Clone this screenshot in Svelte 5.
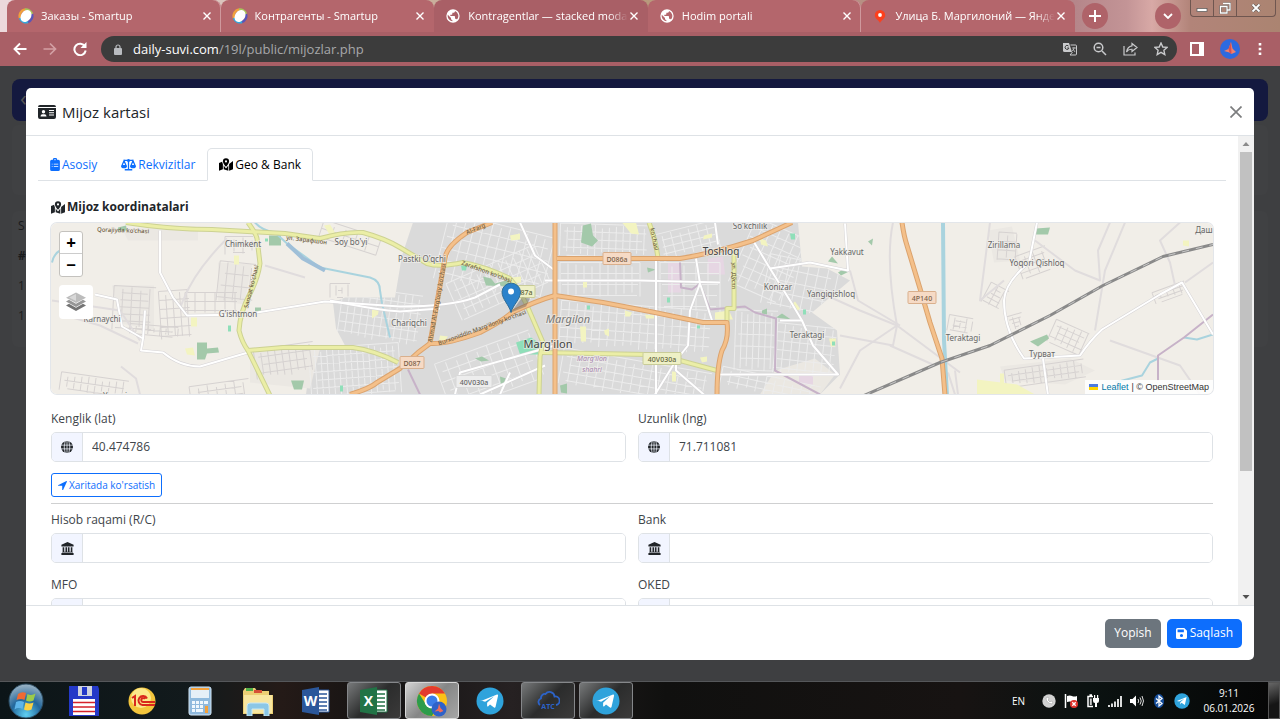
<script lang="ts">
    const browserTabs = [
        { title: 'Заказы - Smartup', icon: 'smartup', shade: 'light' },
        { title: 'Контрагенты - Smartup', icon: 'smartup', shade: 'light' },
        { title: 'Kontragentlar — stacked moda', icon: 'globe', shade: 'current' },
        { title: 'Hodim portali', icon: 'globe', shade: 'light' },
        { title: 'Улица Б. Маргилоний — Янде', icon: 'pin', shade: 'light' },
    ];

    let tab = $state('geo');
    let lat = $state('40.474786');
    let lng = $state('71.711081');

    const tabs = [
        ['main', 'Asosiy', 'clipboard'],
        ['req', 'Rekvizitlar', 'scale'],
        ['geo', 'Geo & Bank', 'map'],
    ];

    const bankFields = [
        ['account', 'Hisob raqami (R/C)'],
        ['bank', 'Bank'],
        ['mfo', 'MFO'],
        ['oked', 'OKED'],
    ];

    const taskItems = [
        ['Total Commander', 'floppy', ''],
        ['1C', 'onec', ''],
        ['Calculator', 'calc', ''],
        ['Explorer', 'folder', ''],
        ['Word', 'word', ''],
        ['Excel', 'excel', 'open'],
        ['Chrome', 'chrome', 'focused'],
        ['Telegram', 'telegram', ''],
        ['ATC', 'atc', 'open'],
        ['Telegram', 'telegram', 'open'],
    ];

    // x, y, width, height, rotation, column step, row step
    type Block = [number, number, number, number, number, number, number];

    const cityBlocks: Block[] = [
        [440, 224, 110, 68, 14, 9, 12],
        [450, 262, 96, 40, -24, 8, 10],
        [340, 290, 80, 50, 8, 7, 9],
        [310, 345, 90, 50, -4, 6, 8],
        [440, 345, 100, 50, -20, 11, 10],
        [560, 224, 90, 32, 2, 7, 8],
        [560, 262, 80, 34, 0, 8, 11],
        [560, 305, 150, 44, 4, 8, 9],
        [560, 360, 150, 36, 10, 9, 8],
        [655, 226, 70, 28, -14, 9, 7],
        [740, 226, 60, 70, 24, 9, 10],
        [660, 262, 60, 50, 0, 12, 11],
        [735, 310, 42, 60, 2, 6, 12],
        [775, 325, 60, 50, 6, 8, 9],
        [720, 376, 100, 20, 12, 9, 7],
        [765, 260, 70, 50, 12, 10, 12],
    ];

    const villageBlocks: Block[] = [
        [113, 286, 42, 44, 3, 9, 7],
        [160, 290, 30, 48, -4, 7, 9],
        [185, 292, 52, 20, 0, 10, 9],
        [218, 262, 36, 40, 6, 8, 12],
        [225, 236, 28, 18, 0, 9, 8],
        [60, 376, 68, 18, 8, 7, 8],
        [130, 325, 48, 10, 5, 6, 5],
        [190, 382, 60, 18, -8, 9, 7],
        [255, 345, 60, 30, -8, 7, 8],
        [330, 283, 20, 14, 0, 6, 7],
        [998, 232, 18, 28, 4, 9, 9],
        [1018, 250, 32, 24, -20, 9, 6],
        [985, 285, 20, 22, 28, 8, 5],
        [1008, 314, 16, 16, -16, 6, 4],
        [948, 316, 24, 16, 10, 6, 5],
        [1005, 364, 80, 18, -8, 7, 6],
        [1050, 325, 36, 24, 24, 7, 6],
        [1153, 286, 34, 12, -20, 7, 4],
        [320, 228, 60, 18, 18, 12, 9],
    ];

    function grid([x, y, w, h, , dx, dy]: Block): string {
        let d = '';
        for (let i = 0; i <= w; i += dx) {
            const cut = (i * 7) % 5;
            d += `M${x + i} ${y + cut}V${y + h - cut}`;
        }
        for (let j = 0; j <= h; j += dy) {
            const cut = (j * 5) % 9;
            d += `M${x + cut} ${y + j}H${x + w - cut}`;
        }
        return d;
    }

    function turn([x, y, w, h, a]: Block): string {
        return `rotate(${a} ${x + w / 2} ${y + h / 2})`;
    }

    const yellowRoads = [
        'M126 222Q170 229 212 229L285 233L320 238Q345 231 363 232Q385 238 400 247L427 263Q440 267 463 262Q485 266 510 278Q520 290 527 305L543 342L540 356L539 395',
        'M248 222Q256 233 257 238L260 263Q258 278 250 293Q240 312 239 330Q242 342 248 350L270 395',
        'M248 350L283 347H353Q375 350 398 362',
        'M542 352L647 354L680 360L717 370',
        'M649 222Q656 240 658 258',
        'M734 250V308H727V322',
    ];

    const orangeRoads = [
        'M350 394Q370 388 377 382L400 368L418 352L430 343Q447 344 480 332Q500 322 512 312Q537 300 555 295L603 302L650 311L703 322H727Q729 338 722 350Q717 365 717 395',
        'M555 222V395',
        'M430 343L437 302L445 258Q446 246 467 232L492 222',
        'M557 258H680Q713 253 753 240L792 222',
        'M902 222Q904 236 907 245L920 288L930 322L942 358L945 395',
    ];

    const whiteRoads = [
        'M160 230V272L173 297L187 315L245 314L325 301L400 306Q450 306 475 297L500 284',
        'M95 294L117 299L122 326L143 338L141 350L163 352Q180 366 200 366L248 352',
        'M143 338L145 310',
        'M753 240L770 268L790 300L802 320L813 345L838 374H717',
        'M770 268L810 262L848 270L845 223',
        'M656 258V394M696 258L700 283L712 320M700 283L690 310L688 345L676 360L655 394',
        'M715 222L718 244M676 360V370L705 395',
        'M520 222L535 255L555 270M510 372L500 394',
        'M545 280H640L720 282M330 300Q380 310 400 311L440 308',
        'M455 394L460 372L555 345M480 394L545 365',
        'M1037 222L1029 262Q1005 282 1004 300Q1004 330 1024 358L1080 355Q1090 340 1102 329L1160 294L1182 282L1213 334',
        'M1043 358L1048 395',
        'M780 320H802',
    ];

    const tracks = [
        'M227 238Q195 270 183 300L180 308M265 265L305 277',
        'M121 366L136 378L140 394',
        'M893 222Q885 260 897 325L860 310L820 292M897 325L860 350L840 388M840 335L893 345L897 325L960 372',
        'M850 270L858 300L900 325M890 345L935 365',
        'M1110 222L1098 250L1100 280L1075 270L1035 240M1125 222L1105 270L1095 330',
        'M1180 222L1160 240L1170 262L1175 285M990 222L980 300L1004 280M1213 262L1185 282',
        'M955 370L958 394M948 372L955 394M1110 340L1180 365L1200 394',
        'M52 300L120 310L140 340M62 314L100 325L138 343',
    ];

    const boundaries = [
        'M680 262L681 287L692 289L700 283L710 309L745 306L755 312L776 318L775 370L820 394',
        'M408 369L420 394',
        'M1158 380V355L1184 337L1213 314',
    ];

    const greens = [
        'M269 235h12v10h-12z', 'M197 342h10v6l11 -1l1 5l-12 1l-2 6h-8z', 'M291 380l13 0l-2 9h-8z',
        'M118 227l8 -2l1 5h-9z', 'M255 307h6v5h-6z', 'M483 276l8 2l4 5l15 -4l-2 7l-22 -1z',
        'M583 225l8 -2l2 12l5 5l-6 6l-11 -4z', 'M475 358l7 -2l7 4l-8 1z', 'M500 376l6 2l-2 8h-3z',
        'M560 385l7 -2v10l-6 -1z', 'M828 261l4 -5l6 7z', 'M838 272l5 -3l6 2l-8 4z',
        'M776 317l6 -4l9 6z', 'M762 310l5 -2v6l-5 -1z', 'M1036 228l14 -1l-2 7h-12z', 'M1030 341l17 -7l2 4l-11 8z',
        'M647 267l9 2l-8 3z', 'M868 241l5 -3l-1 7z',
    ];

    const yellows = [
        'M234 255h5v9h-5z', 'M191 317h6v9h-6z', 'M185 348l8 -1l2 8l-8 -1z', 'M324 225l6 -1l5 8l-5 3z',
        'M372 309l7 -1l-1 6l-6 4z', 'M510 235l10 -2v6l-9 1z', 'M512 277l9 -1v6l-8 1z', 'M580 326l6 0v15h-5z',
        'M622 222l14 0l3 12l-8 -1z', 'M583 279h4v8h-4z', 'M604 330l5 -2v8l-4 -2z', 'M440 335l8 1l-3 4h-6z',
        'M700 357l7 -1v5l-5 1z', 'M672 371h4v10h-4z', 'M715 312l14 -2l4 9h-18z', 'M795 301l5 7l-3 3l-4 -8z',
        'M829 338l7 0l-1 8h-4z', 'M704 235l8 -2v4l-9 2z', 'M760 238l6 2l2 6l-7 -2z', 'M625 310l7 2l-2 4h-5z',
        'M1183 240l6 0v6l-6 -1z', 'M977 379l40 5l18 10h-58z', 'M1000 373h4v12h-4z', 'M645 314l9 1v3h-8z',
    ];

    const mints = [
        'M265 238h3v3h-3z', 'M228 325h3v6h-3z', 'M340 385h3v6h-3z', 'M461 265h6l-1 5h-4z', 'M516 342l15 -5l9 6l-2 11l-18 0z',
        'M790 233h5v6h-4z', 'M803 309h3v5h-3z', 'M667 297h3v5h-3z', 'M832 341h3v4h-3z', 'M697 325h3v3h-3z', 'M587 305h3v4h-3z',
    ];

    // text, x, y, size, class
    const places: [string, number, number, number, string][] = [
        ['Chimkent', 243, 246, 8, ''], ["Soy bo'yi", 351, 244, 8, ''], ["Pastki O'qchi", 422, 261, 8, ''],
        ["G'ishtmon", 238, 316, 8, ''], ['Karnaychi', 102, 321, 8, ''], ['Chariqchi', 409, 325, 8, ''],
        ['Toshloq', 721, 254, 10, 'town'], ["So'kchilik", 750, 228, 8, ''], ['Yakkavut', 847, 254, 8, ''],
        ['Konizar', 778, 289, 8, ''], ['Yangiqishloq', 831, 296, 8, ''], ['Teraktagi', 807, 337, 8, ''],
        ['Margilon', 568, 322, 11, 'district'], ["Marg'ilon", 548, 347, 11, 'town'],
        ["Marg'ilon", 592, 360, 7, 'admin'], ['shahri', 592, 371, 7, 'admin'],
        ['Zirillama', 1004, 247, 8, ''], ['Yoqori Qishloq', 1037, 265, 8, ''], ['Teraktagi', 963, 340, 8, ''],
        ['Турват', 1042, 356, 8, ''], ['Даш', 1204, 232, 8, ''], ['Yoqori', 115, 398, 8, ''],
    ];

    // text, x, y, width, kind
    const shields: [string, number, number, number, string][] = [
        ['D086a', 617, 258, 28, 'orange'], ['D087', 412, 362, 24, 'orange'], ['4P140', 922, 297, 28, 'orange'],
        ['D087a', 522, 291, 26, 'yellow'], ['40V030a', 662, 358, 38, 'yellow'], ['40V030a', 474, 381, 36, 'grey'],
    ];
</script>

{#snippet icon(name)}
    {#if name === 'clipboard'}
        <svg class="ico" width="10" height="13" viewBox="0 0 12 16"><path fill="currentColor" fill-rule="evenodd" d="M2 2h1.500a2.500 2.500 0 0 1 5 0H10a2 2 0 0 1 2 2v10a2 2 0 0 1-2 2H2a2 2 0 0 1-2-2V4a2 2 0 0 1 2-2zm4-.7a.8.8 0 1 0 0 1.600.8.8 0 0 0 0-1.600zM2 7v1h1V7zm2.500 0v1H10V7zM2 10v1h1v-1zm2.500 0v1H10v-1z" /></svg>
    {:else if name === 'scale'}
        <svg class="ico" width="15" height="13" viewBox="0 0 20 16"><g fill="none" stroke="currentColor" stroke-width="1.700"><path d="M4 2.500h12M10 2v12.500M5 15h10M4 3L1.300 9.500h5.400zM16 3l-2.700 6.500h5.400z" /></g><circle cx="10" cy="2.500" r="2" fill="currentColor" /><path fill="currentColor" d="M0 9.500h8a4 3.500 0 0 1-8 0zM12 9.500h8a4 3.500 0 0 1-8 0z" /></svg>
    {:else if name === 'map'}
        <svg class="ico" width="14" height="13" viewBox="0 0 18 16"><path fill="currentColor" fill-rule="evenodd" d="M9 0a4 4 0 0 1 4 4c0 2-2.500 5-4 7-1.500-2-4-5-4-7a4 4 0 0 1 4-4zm0 2.600a1.400 1.400 0 1 0 0 2.800 1.400 1.400 0 0 0 0-2.800zM0 6l4-1.500c.2 1 .6 2 1 2.800V14l-5 2zM6 9.300l3 3.700 3-3.700V16l-6-2zM13 7.300L18 3.500V14l-5 2z" /></svg>
    {:else if name === 'globe'}
        <svg class="ico" width="12" height="12" viewBox="0 0 16 16"><circle cx="8" cy="8" r="8" fill="currentColor" /><path d="M0 5.500h16M0 10.500h16M8 0v16M5.500 0Q3 8 5.500 16M10.500 0Q13 8 10.500 16" fill="none" stroke="#f2f5ff" /></svg>
    {:else if name === 'bank'}
        <svg class="ico" width="13" height="13" viewBox="0 0 16 16"><path fill="currentColor" d="M8 0l7.500 3.500V5.500H.5v-2zM2 6.500h2V12h1.500V6.500h2V12h1V6.500h2V12H12V6.500h2V12l1 1H1l1-1zM.5 13.500h15V16H.5z" /></svg>
    {:else if name === 'arrow'}
        <svg class="ico" width="9" height="9" viewBox="0 0 16 16"><path fill="currentColor" d="M0 7.500L15 0Q16 0 16 1L9 16H7.500V8.500H0z" /></svg>
    {:else if name === 'save'}
        <svg class="ico" width="11" height="11" viewBox="0 0 14 14"><path fill="currentColor" fill-rule="evenodd" d="M2 0h8.500L14 3.500V12a2 2 0 0 1-2 2H2a2 2 0 0 1-2-2V2a2 2 0 0 1 2-2zm0 2v3.500h8V2zm5 5.500a2 2 0 1 0 0 4 2 2 0 0 0 0-4z" /></svg>
    {/if}
{/snippet}

{#snippet taskIcon(name)}
    {#if name === 'floppy'}
        <svg width="32" height="32" viewBox="0 0 32 32"><path d="M1 1h29l1 3v27H1z" fill="#2439c8" /><path d="M10 1h14v10H10z" fill="#cfd3de" /><path d="M14 2h5v8h-5z" fill="#2439c8" /><path d="M5 14h22v16H5z" fill="#fff" /><path d="M5 17.500h22M5 22h22M5 26.500h22" stroke="#d5222a" stroke-width="1.300" /></svg>
    {:else if name === 'onec'}
        <svg width="28" height="28" viewBox="0 0 28 28"><circle cx="14" cy="14" r="13.500" fill="#f3c53c" /><circle cx="13" cy="11" r="10" fill="#fce98a" /><g fill="none" stroke="#d9281d" stroke-width="2"><path d="M4 11l3-2v10M19 11.500a4.500 4.500 0 1 0-4.500 6.500H27M17 12a2 2 0 1 0-2 3h12" /></g></svg>
    {:else if name === 'calc'}
        <svg width="24" height="30" viewBox="0 0 24 30"><rect x="1" y="1" width="22" height="28" rx="2" fill="#8fb9dd" stroke="#d7e9f7" /><path d="M3 3h18v9H3z" fill="#e6eff7" /><path d="M3 3h18" stroke="#f3a13b" stroke-width="2" /><path d="M4 15h3v3H4zM8 15h3v3H8zM12 15h3v3h-3zM16 15h4v3h-4zM4 19h3v3H4zM8 19h3v3H8zM12 19h3v3h-3zM4 23h3v3H4zM8 23h7v3H8z" fill="#eff7fd" /><path d="M17 20h3v7h-3z" fill="#f3a13b" /></svg>
    {:else if name === 'folder'}
        <svg width="32" height="30" viewBox="0 0 32 30"><path d="M1 5l2-3h10l2 3h12v4h4v19H1z" fill="#eccf74" /><path d="M4 2h7v3H4z" fill="#4fae49" /><path d="M12 4h8v3h-8z" fill="#d65038" /><path d="M2 9h28v18H2z" fill="#f8e6a0" /><path d="M5 30V20q0-3 3-3h16q3 0 3 3v10h-5v-7H10v7z" fill="#8cc7e6" stroke="#c9e8f5" /></svg>
    {:else if name === 'word' || name === 'excel'}
        <svg class={name} width="30" height="30" viewBox="0 0 30 30"><path d="M15 4h13v22H15z" fill="#fff" stroke="currentColor" /><path d="M18 8h8M18 12h8M18 16h8M18 20h8M18 24h8" stroke="currentColor" stroke-width="1.500" /><path d="M1 4l17-3v28L1 26z" fill="currentColor" /><text x="9.500" y="20" text-anchor="middle" font-size="14" font-weight="700" fill="#fff">{name === 'word' ? 'W' : 'X'}</text></svg>
    {:else if name === 'chrome'}
        <svg width="32" height="32" viewBox="0 0 32 32"><circle cx="16" cy="16" r="15" fill="#fbc116" /><path d="M16 16L3 8.500A15 15 0 0 1 29 8.500H16z" fill="#e33b2e" /><path d="M3 8.500A15 15 0 0 0 16 31l6.500-11.500L10 19.500z" fill="#2d9c4b" /><circle cx="16" cy="16" r="7.500" fill="#fff" /><circle cx="16" cy="16" r="5.500" fill="#3b7de8" /><circle cx="23" cy="24" r="7.500" fill="#2f62c9" /><path d="M23 18.500l1.500 4.500 3 3-3.500 1.500-1.500-1.500-4 .5 3.500-3z" fill="#ee6c5b" /></svg>
    {:else if name === 'telegram'}
        <svg width="28" height="28" viewBox="0 0 28 28"><circle cx="14" cy="14" r="13.500" fill="#2fa3dc" /><path d="M5 14L21 7.500q1.500-.4 1 1.500l-2.500 11q-.5 1-1.500.4l-4-3-2 2q-.8.500-.9-.6v-3l7-6.500-9 5.500-4-1.200q-.8-.4-.1-.6z" fill="#fff" /></svg>
    {:else}
        <svg width="24" height="20" viewBox="0 0 24 20"><path d="M4 14a3.700 3.700 0 0 1 1-6.500 4 4 0 0 1 4.500-4.500 5 5 0 0 1 9 2.500 4.300 4.300 0 0 1 1.500 8.500" fill="none" stroke="#2c63c8" stroke-width="1.800" /><text x="12" y="18" text-anchor="middle" font-size="7" font-weight="700" fill="#2c63c8">ATC</text></svg>
    {/if}
{/snippet}

<div class="screen">
    <header class="browser">
        <div class="strip">
            <div class="browser-tabs">
                {#each browserTabs as t}
                    <div class="browser-tab {t.shade}">
                        {#if t.icon === 'smartup'}
                            <svg width="16" height="16" viewBox="0 0 16 16"><path d="M2 10A6.500 6.500 0 0 1 7 1.500" fill="none" stroke="#f0a03c" stroke-width="2.500" /><path d="M7 1.500A6.500 6.500 0 0 1 14 6" fill="none" stroke="#a6c65a" stroke-width="2.500" /><path d="M14 6A6.500 6.500 0 0 1 10 14" fill="none" stroke="#5a55b8" stroke-width="2.500" /><path d="M10 14A6.500 6.500 0 0 1 2 10" fill="none" stroke="#35a8dc" stroke-width="2.500" /><ellipse cx="8" cy="8" rx="5" ry="6.500" transform="rotate(35 8 8)" fill="#fff" /></svg>
                        {:else if t.icon === 'globe'}
                            <svg width="16" height="16" viewBox="0 0 24 24"><path fill="#fff" d="M12 2a10 10 0 1 0 0 20 10 10 0 0 0 0-20zm-1 17.900A8 8 0 0 1 4.200 10.200L9 15v1a2 2 0 0 0 2 2zm6.900-2.500A2 2 0 0 0 16 16h-1v-3a1 1 0 0 0-1-1H8v-2h2a1 1 0 0 0 1-1V7h2a2 2 0 0 0 2-2v-.4a8 8 0 0 1 2.900 12.800z" /></svg>
                        {:else}
                            <svg width="16" height="16" viewBox="0 0 16 16"><path d="M8 2a5.200 5.200 0 0 1 5.200 5.200C13.200 10.500 9 12 8 15 7 12 2.800 10.500 2.800 7.200A5.200 5.200 0 0 1 8 2z" fill="#fc3f1d" /><circle cx="8" cy="7" r="1.900" fill="#fff" /></svg>
                        {/if}
                        <span class="browser-title">{t.title}</span>
                        <button class="tab-close" aria-label="Close tab">
                            <svg width="8" height="8" viewBox="0 0 8 8"><path d="M.5.5l7 7M7.500.5l-7 7" stroke="#fff" stroke-width="1.400" /></svg>
                        </button>
                    </div>
                {/each}
            </div>
            <button class="round" aria-label="New tab"><svg width="12" height="12" viewBox="0 0 12 12"><path d="M6 0v12M0 6h12" stroke="#fff" stroke-width="2" /></svg></button>
            <span class="grow"></span>
            <button class="round search-tabs" aria-label="Search tabs"><svg width="10" height="6" viewBox="0 0 10 6"><path d="M1 1l4 4 4-4" fill="none" stroke="#fff" stroke-width="1.800" /></svg></button>
            <div class="window-controls">
                <button aria-label="Minimize"><svg width="12" height="12" viewBox="0 0 12 12"><rect x="1" y="6.500" width="10" height="3" fill="#fff" stroke="#555" stroke-width=".7" /></svg></button>
                <button aria-label="Restore"><svg width="12" height="12" viewBox="0 0 12 12"><path d="M4 1.500h7v6.500H8.500M1.500 4.500h6.500v6.500H1.500z" fill="none" stroke="#555" stroke-width="2.200" /><path d="M4 1.500h7v6.500H8.500M1.500 4.500h6.500v6.500H1.500z" fill="none" stroke="#fff" stroke-width="1.300" /></svg></button>
                <button class="wide" aria-label="Close window"><svg width="10" height="10" viewBox="0 0 10 10"><path d="M1.500 1.500l7 7M8.500 1.500l-7 7" stroke="#555" stroke-width="3" /><path d="M1.500 1.500l7 7M8.500 1.500l-7 7" stroke="#fff" stroke-width="1.800" /></svg></button>
            </div>
        </div>

        <div class="toolbar">
            <button aria-label="Back"><svg width="14" height="14" viewBox="0 0 14 14"><path d="M13.500 7H1.500M7 1.500L1.500 7 7 12.500" fill="none" stroke="#fff" stroke-width="1.900" /></svg></button>
            <button aria-label="Forward"><svg width="14" height="14" viewBox="0 0 14 14"><path d="M.5 7h12M7 1.500L12.500 7 7 12.500" fill="none" stroke="#d3a0a4" stroke-width="1.700" /></svg></button>
            <button aria-label="Reload"><svg width="14" height="14" viewBox="0 0 14 14"><path d="M12 4.500A5.700 5.700 0 1 0 12.700 8.500" fill="none" stroke="#fff" stroke-width="2" /><path d="M13.500 0v6h-6z" fill="#fff" /></svg></button>
            <div class="address">
                <svg width="8" height="11" viewBox="0 0 8 11"><rect y="4" width="8" height="7" rx="1" fill="#b9bcc0" /><path d="M2 4.500V3a2 2 0 0 1 4 0v1.500" fill="none" stroke="#b9bcc0" stroke-width="1.200" /></svg>
                <span class="url"><b>daily-suvi.com</b>/19l/public/mijozlar.php</span>
                <svg width="14" height="14" viewBox="0 0 14 14"><path d="M0 1h6l3 9H1.500Q0 10 0 8.500z" fill="#c9cacc" /><path d="M7.500 3h5q1 0 1 1v8q0 1-1 1H7l2.500-3" fill="none" stroke="#c9cacc" /><path d="M9 6h4M11 5v1q0 2-2 3M10 7l2 3" fill="none" stroke="#c9cacc" stroke-width=".8" /><path d="M5.500 4A2 2 0 1 0 6 6H4.200" fill="none" stroke="#3c3c3c" /></svg>
                <svg width="14" height="14" viewBox="0 0 14 14"><circle cx="5.500" cy="5.500" r="4.300" fill="none" stroke="#c9cacc" stroke-width="1.500" /><path d="M9 9l4 4M3.500 5.500h4" stroke="#c9cacc" stroke-width="1.500" /></svg>
                <svg width="15" height="14" viewBox="0 0 15 14"><path d="M1 4v9h11v-2.500M9 1.500l5 4-5 4V7.300Q5.500 7 3.500 10 4.500 4.500 9 3.800z" fill="none" stroke="#c9cacc" stroke-width="1.200" /></svg>
                <svg width="14" height="14" viewBox="0 0 14 14"><path d="M7 1l1.800 4 4.300.4-3.200 2.900.9 4.300L7 10.400l-3.800 2.200.9-4.300L.9 5.400 5.200 5z" fill="none" stroke="#c9cacc" stroke-width="1.400" /></svg>
            </div>
            <button aria-label="Side panel"><svg width="14" height="14" viewBox="0 0 14 14"><path d="M1 1h12v12H1z" fill="none" stroke="#fff" stroke-width="2" /><path d="M9 1h4v12H9z" fill="#fff" /></svg></button>
            <button aria-label="Profile"><svg width="20" height="20" viewBox="0 0 20 20"><circle cx="10" cy="10" r="10" fill="#2c6ae0" /><path d="M11 3l1.500 6.500 3.500 3.500-4.500 2-2-1.500L4 12l4.500-2z" fill="#f0806d" /><path d="M11 3l-2.500 7 1 3.500 2 1.500z" fill="#d84f52" /></svg></button>
            <button aria-label="Menu"><svg width="4" height="14" viewBox="0 0 4 14"><path d="M.7 1h2.600v2.600H.7zM.7 5.700h2.600v2.600H.7zM.7 10.400h2.600V13H.7z" fill="#fff" /></svg></button>
        </div>
    </header>

    <main class="page">
        <div class="page-nav"><span>‹</span></div>
        <div class="page-card small"></div>
        <div class="page-card table">
            <span>S</span>
            <b>#</b>
            <span>1</span>
            <span>1</span>
        </div>

        <div class="modal" role="dialog" aria-labelledby="modal-title">
            <div class="modal-header">
                <svg width="18" height="14" viewBox="0 0 18 14"><path fill="#212529" fill-rule="evenodd" d="M2 0h14a2 2 0 0 1 2 2H0a2 2 0 0 1 2-2zM0 3h18v9a2 2 0 0 1-2 2H2a2 2 0 0 1-2-2zm5.500 2a1.700 1.700 0 1 0 0 3.400 1.700 1.700 0 0 0 0-3.400zM2.500 11.500h6q0-2.300-2-2.300h-2q-2 0-2 2.300zM11 5v1h5V5zm0 2.200v1h5v-1zm0 2.300v1h5v-1z" /></svg>
                <h1 id="modal-title">Mijoz kartasi</h1>
                <button class="modal-close" aria-label="Yopish"><svg width="12" height="12" viewBox="0 0 12 12"><path d="M.5.5l11 11M11.500.5l-11 11" stroke="#7c7d7e" stroke-width="1.700" /></svg></button>
            </div>

            <div class="modal-body">
                <div class="body-content">
                    <div class="nav-tabs" role="tablist">
                        {#each tabs as [id, label, ic]}
                            <button role="tab" class="nav-tab" class:active={tab === id} aria-selected={tab === id} onclick={() => (tab = id)}>
                                {@render icon(ic)}{label}
                            </button>
                        {/each}
                    </div>

                    <div class="pane">
                        <h2>{@render icon('map')}Mijoz koordinatalari</h2>

                        <div class="map">
                            <svg class="tiles" viewBox="51 222 1162 172" preserveAspectRatio="xMidYMid slice">
                                <defs>
                                    <clipPath id="city">
                                        <path d="M413 222L402 255L395 297L345 297L333 302L336 328L345 345L312 348L306 394H820L840 374L837 330L812 312L850 280L827 268L802 266L798 222z" />
                                    </clipPath>
                                </defs>
                                <rect x="51" y="222" width="1162" height="172" fill="#f1eee8" />
                                <path d="M413 222L402 255L395 297L345 297L333 302L336 328L345 345L312 348L306 394H820L840 374L837 330L812 312L850 280L827 268L802 266L798 222z" fill="#dadada" />
                                <path d="M112 285h42v44l-34 -6zM218 262l34 2l-8 40l-26 -4zM122 228h76v12h-70zM250 350l70 -2l-10 40l-60 -6zM1000 366l70 -8l25 12l-30 14l-60 -4zM988 230l24 -4l8 34l-26 2z" fill="#ebe8e3" />
                                <path d="M775 370l40 -12l20 16l-15 20h-60z" fill="#ebe8e2" />
                                <path d="M668 262h13v30h-13zM708 258l15 -2l2 18h-18zM799 373h14v11h-14z" fill="#e6d6e3" />
                                {#each villageBlocks as b}
                                    <path d={grid(b)} transform={turn(b)} class="lane" />
                                {/each}
                                {#each tracks as d}<path {d} class="track" />{/each}
                                <g clip-path="url(#city)">
                                    {#each cityBlocks as b}
                                        <path d={grid(b)} transform={turn(b)} class="street" />
                                    {/each}
                                </g>
                                {#each greens as d}<path {d} fill="#a3c9aa" />{/each}
                                {#each yellows as d}<path {d} fill="#f3f4c1" />{/each}
                                {#each mints as d}<path {d} fill="#8fdfb9" />{/each}
                                <path class="water" d="M255 222Q262 230 275 232L287 243L320 267L350 273L370 277Q380 280 380 290L382 303L390 337M52 262Q54 253 60 250M1115 382L1142 375L1150 362L1158 358M1184 337L1197 339L1213 334" />
                                <path class="river" d="M287 243L303 258L325 270" />
                                <path class="canal" d="M943 222L944 340L947 395" />
                                {#each boundaries as d}<path {d} class="boundary" />{/each}
                                {#each whiteRoads as d}<path {d} class="road-case" />{/each}
                                {#each whiteRoads as d}<path {d} class="road" />{/each}
                                {#each yellowRoads as d}<path {d} class="yellow-case" />{/each}
                                {#each yellowRoads as d}<path {d} class="yellow-road" />{/each}
                                {#each orangeRoads as d}<path {d} class="orange-case" />{/each}
                                {#each orangeRoads as d}<path {d} class="orange-road" />{/each}
                                <path class="rail" d="M864 395L940 362L990 345L1050 315L1103 285L1163 256L1213 244" />
                                <path class="rail-dash" d="M864 395L940 362L990 345L1050 315L1103 285L1163 256L1213 244" />
                                <g class="street-names">
                                    <text x="97" y="231" transform="rotate(2 97 231)">Qorajiyda ko'chasi</text>
                                    <text x="286" y="239" transform="rotate(7 286 239)">ул. Зарафшон</text>
                                    <text x="248" y="308" transform="rotate(-76 248 308)">Sanoat ko'chasi</text>
                                    <text x="461" y="264" transform="rotate(20 461 264)">Zarafshon ko'chasi</text>
                                    <text x="432" y="342" transform="rotate(-80 432 342)">Ahmad Al-Farg'oniy ko'chasi</text>
                                    <text x="439" y="345" transform="rotate(-20 439 345)">Burxoniddin Marg'iloniy ko'chasi</text>
                                    <text x="467" y="234" transform="rotate(-22 467 234)">Al-Farg</text>
                                    <text x="732" y="262" transform="rotate(90 732 262)">ул. Дўстл</text>
                                    <text x="650" y="228" transform="rotate(78 650 228)">ko'chasi</text>
                                </g>
                                {#each shields as [text, x, y, w, kind]}
                                    <g class="shield {kind}">
                                        <rect x={x - w / 2} y={y - 6} width={w} height="12" rx="1" />
                                        <text {x} y={y + 3} text-anchor="middle">{text}</text>
                                    </g>
                                {/each}
                                {#each places as [text, x, y, size, kind]}
                                    <text {x} {y} font-size={size} class="place {kind}" text-anchor="middle">{text}</text>
                                {/each}
                                <path d="M511 312L522 297L530 298L526 306z" fill="#555" opacity=".4" />
                                <path d="M511 312C509 304 502 299 502 291A9.300 9.300 0 0 1 520.500 291C520.500 299 513 304 511 312z" fill="#2b82cb" stroke="#2e6c97" />
                                <circle cx="511" cy="291" r="3" fill="#fff" />
                            </svg>
                            <div class="map-controls">
                                <div class="zoom">
                                    <button aria-label="Zoom in">+</button>
                                    <button aria-label="Zoom out">−</button>
                                </div>
                                <button class="layers" aria-label="Layers">
                                    <svg width="22" height="22" viewBox="0 0 22 22"><path d="M1 14.500L11 20l10-5.500-3-1.800-7 4-7-4z" fill="#747474" /><path d="M1 10.500L11 16l10-5.500-3-1.800-7 4-7-4z" fill="#979797" /><path d="M1 6.800L11 12l10-5.200L11 1.500z" fill="#bcbcbc" /><path d="M4 6.500L11 3v7z" fill="#d8d8d8" /></svg>
                                </button>
                            </div>
                            <div class="attribution">
                                <svg width="9" height="6" viewBox="0 0 9 6"><path d="M0 0h9v3H0z" fill="#4c7be1" /><path d="M0 3h9v3H0z" fill="#ffd500" /></svg>
                                <a href="#leaflet">Leaflet</a> | © OpenStreetMap
                            </div>
                        </div>

                        <div class="fields coords">
                            <div class="field">
                                <label for="lat">Kenglik (lat)</label>
                                <div class="input-group"><span class="addon">{@render icon('globe')}</span><input id="lat" type="text" bind:value={lat} /></div>
                            </div>
                            <div class="field">
                                <label for="lng">Uzunlik (lng)</label>
                                <div class="input-group"><span class="addon">{@render icon('globe')}</span><input id="lng" type="text" bind:value={lng} /></div>
                            </div>
                        </div>

                        <button class="btn-outline">{@render icon('arrow')}Xaritada ko'rsatish</button>
                        <hr />

                        <div class="fields">
                            {#each bankFields as [id, label]}
                                <div class="field">
                                    <label for={id}>{label}</label>
                                    <div class="input-group"><span class="addon">{@render icon('bank')}</span><input {id} type="text" /></div>
                                </div>
                            {/each}
                        </div>
                    </div>
                </div>

                <div class="scrollbar">
                    <svg width="16" height="16" viewBox="0 0 16 16"><path d="M4.500 10L8 6l3.500 4z" fill="#8b8b8b" /></svg>
                    <div class="track-area"><div class="thumb"></div></div>
                    <svg width="16" height="16" viewBox="0 0 16 16"><path d="M4.500 6L8 10l3.500-4z" fill="#505050" /></svg>
                </div>
            </div>

            <div class="modal-footer">
                <button class="btn secondary">Yopish</button>
                <button class="btn primary">{@render icon('save')}Saqlash</button>
            </div>
        </div>
    </main>

    <footer class="taskbar">
        <button class="start" aria-label="Start">
            <svg width="36" height="36" viewBox="0 0 36 36"><defs><radialGradient id="orb" cx=".5" cy=".9" r=".9"><stop offset="0" stop-color="#5fd0f2" /><stop offset=".5" stop-color="#23679c" /><stop offset="1" stop-color="#9fb6c6" /></radialGradient></defs><circle cx="18" cy="18" r="17" fill="url(#orb)" stroke="#2b4c62" /><path d="M10 11q4-3 8-1l-1.500 7q-4-2-8 0z" fill="#ef6a32" /><path d="M19.500 11q4 2 8-.5l-2 7q-4 2-7.500 0z" fill="#9ccb4a" /><path d="M8 19q4-2 8 0l-1.500 7q-4-2-8 .5z" fill="#5eb5ea" /><path d="M17.500 19.500q4 2 8 0l-2 7q-4 2-7.500 0z" fill="#fbd144" /></svg>
        </button>
        <div class="tasks">
            {#each taskItems as [name, ic, mode]}
                <button class="task {mode}" aria-label={name}>{@render taskIcon(ic)}</button>
            {/each}
        </div>
        <div class="tray">
            <span class="lang">EN</span>
            <svg width="14" height="14" viewBox="0 0 14 14"><circle cx="7" cy="7" r="6.700" fill="#d2d2d2" /><path d="M4 4q0 5 6 6l1-2-2-1-1 1-2-2 1-1-1-2z" fill="#fff" stroke="#999" stroke-width=".5" /></svg>
            <svg width="14" height="14" viewBox="0 0 14 14"><path d="M1.500 0v14" stroke="#fff" stroke-width="1.500" /><path d="M3 2q3-1 5 0t5 0v6q-3 1-5 0T3 8z" fill="#fff" /><circle cx="10" cy="10" r="4" fill="#e0312b" /><path d="M8.300 8.300l3.400 3.400M11.700 8.300l-3.400 3.400" stroke="#fff" stroke-width="1.300" /></svg>
            <svg width="14" height="14" viewBox="0 0 14 14"><path d="M7 12.500H2v-10h5M3.500 1h2.500" fill="none" stroke="#fff" stroke-width="1.500" /><path d="M3.800 4.500h2v6.500h-2z" fill="#ccc" /><path d="M7 4h6v3q0 2-2 2v4H9V9Q7 9 7 7zM8 1h1.200v3H8zM11 1h1.200v3H11z" fill="#fff" /></svg>
            <svg width="14" height="14" viewBox="0 0 14 14"><path d="M1 11v2M4 9.500V13M7 7.500V13M10 5v8M13 2v11" stroke="#fff" stroke-width="1.700" /></svg>
            <svg width="14" height="14" viewBox="0 0 14 14"><path d="M0 5h2.500L6 1.500v11L2.500 9H0z" fill="#fff" /><path d="M8 5q1.500 2 0 4M10 3.500q2.500 3.500 0 7M12 2q3 5 0 10" fill="none" stroke="#ddd" /></svg>
            <svg width="14" height="14" viewBox="0 0 14 14"><ellipse cx="7" cy="7" rx="5" ry="7" fill="#174f9c" /><path d="M4 4.500l6 5L7 12V2l3 2.500-6 5" fill="none" stroke="#fff" stroke-width="1.200" /></svg>
            <svg width="16" height="16" viewBox="0 0 28 28"><circle cx="14" cy="14" r="13.500" fill="#2fa3dc" /><path d="M5 14L22 7l-3 14-6-4-2 3v-4l7-6-9 5z" fill="#fff" /></svg>
            <div class="clock"><span>9:11</span><span>06.01.2026</span></div>
            <button class="desktop" aria-label="Show desktop"></button>
        </div>
    </footer>
</div>

<style>
    :global(body) {
        background: #3e3f41;
    }

    .screen {
        display: flex;
        flex-direction: column;
        height: 100vh;
        overflow: hidden;
        font-family: "Open Sans", "Noto Sans", sans-serif;
        font-size: 12px;
        line-height: 18px;
        color: #212529;
    }

    .screen :global(svg) {
        flex: none;
        display: block;
    }

    button {
        font: inherit;
        color: inherit;
        border: 0;
        padding: 0;
        background: none;
        display: flex;
        align-items: center;
        justify-content: center;
        cursor: pointer;
    }

    .grow {
        flex: 1;
    }

    /* browser */
    .strip {
        display: flex;
        height: 32px;
        padding-left: 7px;
        background: linear-gradient(90deg, #ecd9dc 0 1%, #b89a7c 50%, #b5868a 84%, #c39496 88%, #d8a9a6 90%, #b28479 93%, #ab8471 100%);
    }

    .browser-tabs {
        display: flex;
        flex: 0 1 1068px;
        min-width: 0;
    }

    .browser-tab {
        display: flex;
        align-items: center;
        flex: 1 1 0;
        min-width: 0;
        gap: 7px;
        padding: 0 8px 0 11px;
        background: #b4666c;
        border-radius: 8px 8px 0 0;
        color: #fff;
        font-size: 11px;
    }

    .browser-tab.current {
        background: #a95f66;
    }

    .browser-tab:first-child,
    .browser-tab:nth-child(4) {
        box-shadow: inset -1px 0 0 #cf999d;
    }

    .browser-title {
        flex: 1;
        min-width: 0;
        overflow: hidden;
        white-space: nowrap;
        mask-image: linear-gradient(90deg, #000 88%, transparent);
    }

    .tab-close {
        width: 12px;
        height: 16px;
        margin-left: -7px;
    }

    .round {
        width: 26px;
        height: 26px;
        margin: 3px 0 0 7px;
        border-radius: 50%;
        background: #af6369;
    }

    .search-tabs {
        margin-right: 9px;
    }

    .window-controls {
        display: flex;
        height: 16px;
        margin-right: 4px;
        border: 1px solid #6f5650;
        border-top: 0;
        border-radius: 0 0 4px 4px;
    }

    .window-controls button {
        width: 23px;
        border-right: 1px solid #6f5650;
    }

    .window-controls .wide {
        width: 38px;
        border-right: 0;
    }

    .toolbar {
        display: flex;
        align-items: center;
        gap: 16px;
        height: 34px;
        padding: 0 16px 0 13px;
        background: #a95f66;
    }

    .toolbar button:last-child {
        width: 8px;
    }

    .address {
        display: flex;
        align-items: center;
        flex: 1;
        gap: 16px;
        height: 26px;
        margin: 0 -3px 0 -2px;
        padding: 0 9px 0 13px;
        border-radius: 13px;
        background: #3c3c3c;
        color: #a7a8aa;
        font-size: 13px;
    }

    .url {
        flex: 1;
        margin-left: -5px;
    }

    .url b {
        font-weight: 400;
        color: #fff;
    }

    /* page behind the dialog */
    .page {
        position: relative;
        flex: 1;
        min-height: 0;
        padding: 13px 12px;
        background: #3e3f41;
        border-bottom: 1px solid #55575a;
        color: #1a1b1c;
    }

    .page-nav {
        height: 42px;
        padding-left: 8px;
        border-radius: 8px;
        background: #14193f;
        color: #555;
        font-size: 22px;
        line-height: 36px;
    }

    .page-card {
        border-radius: 6px;
        background: #404143;
    }

    .page-card.small {
        height: 70px;
        margin: 4px 0 16px;
    }

    .page-card.table {
        display: flex;
        flex-direction: column;
        gap: 12px;
        height: 124px;
        padding: 6px;
    }

    /* dialog */
    .modal {
        position: absolute;
        inset: 22px 26px 21px;
        display: flex;
        flex-direction: column;
        border-radius: 5px;
        background: #fff;
        color: #212529;
    }

    .modal-header {
        display: flex;
        align-items: center;
        gap: 6px;
        height: 47px;
        padding: 0 12px;
        border-bottom: 1px solid #dee2e6;
    }

    h1 {
        flex: 1;
        margin: 0;
        font-size: 15px;
        font-weight: 400;
    }

    .modal-close {
        width: 13px;
        height: 24px;
    }

    .modal-body {
        display: flex;
        flex: 1;
        min-height: 0;
    }

    .body-content {
        flex: 1;
        min-width: 0;
        overflow: hidden;
        padding: 12px 12px 0;
    }

    .nav-tabs {
        display: flex;
        border-bottom: 1px solid #dee2e6;
    }

    .nav-tab {
        gap: 2px;
        height: 33px;
        margin-bottom: -1px;
        padding: 0 11px;
        border: 1px solid transparent;
        border-radius: 5px 5px 0 0;
        color: #0d6efd;
    }

    .nav-tab.active {
        border-color: #dee2e6 #dee2e6 #fff;
        background: #fff;
        color: #000;
    }

    .pane {
        padding: 16px 13px;
    }

    h2 {
        display: flex;
        align-items: center;
        gap: 2px;
        margin: 0 0 6px;
        font-size: 12px;
        line-height: 20px;
        font-weight: 700;
    }

    .map {
        position: relative;
        height: 171px;
        margin-bottom: 16px;
        border-radius: 6px;
        overflow: hidden;
        box-shadow: 0 0 0 1px #e3e6ea;
        font-size: 9px;
    }

    .tiles {
        width: 100%;
        height: 100%;
        font-family: "Noto Sans", sans-serif;
    }

    .tiles path {
        stroke-linejoin: round;
    }

    .lane,
    .track,
    .street,
    .water,
    .river,
    .canal,
    .boundary,
    .road,
    .road-case,
    .yellow-road,
    .yellow-case,
    .orange-road,
    .orange-case,
    .rail,
    .rail-dash {
        fill: none;
    }

    .lane { stroke: #d6d2d1; stroke-width: 1; }
    .track { stroke: #e0dcdd; stroke-width: 2; }
    .street { stroke: #ececec; stroke-width: 1; }
    .water { stroke: #a9d3de; stroke-width: 2; }
    .river { stroke: #9fbfd8; stroke-width: 4; }
    .canal { stroke: #a9d3de; stroke-width: 4; }
    .boundary { stroke: #c7b2c8; stroke-width: 2; }
    .road-case { stroke: #d6d4d6; stroke-width: 3; }
    .road { stroke: #fff; stroke-width: 2; }
    .yellow-case { stroke: #cdd293; stroke-width: 5; }
    .yellow-road { stroke: #ebeea6; stroke-width: 3; }
    .orange-case { stroke: #dba36e; stroke-width: 5; }
    .orange-road { stroke: #f4c08a; stroke-width: 3; }
    .rail { stroke: #8a8a8a; stroke-width: 3; }
    .rail-dash { stroke: #c9c9c9; stroke-width: 1; stroke-dasharray: 7 7; }

    .street-names {
        font-size: 6px;
        font-weight: 500;
        fill: #6f6045;
    }

    .place {
        fill: #666;
        stroke: #f2f0ec;
        stroke-width: 2px;
        stroke-opacity: 0.6;
        paint-order: stroke;
    }

    .place.town { fill: #444; }
    .place.district { fill: #777; font-style: italic; }
    .place.admin { fill: #a583ad; font-style: italic; }

    .shield text {
        font-size: 7px;
        font-weight: 500;
        fill: #7a5f48;
    }

    .shield.orange rect { fill: #f6dac5; stroke: #d9af8c; }
    .shield.yellow rect { fill: #eef0c6; stroke: #c9cc98; }
    .shield.grey rect { fill: #ededed; stroke: #d8d8d8; }
    .shield.yellow text { fill: #62653b; }
    .shield.grey text { fill: #666; }

    .map-controls {
        position: absolute;
        top: 8px;
        left: 8px;
        display: flex;
        flex-direction: column;
        gap: 8px;
    }

    .zoom {
        width: 24px;
        border: 1px solid #c4c2be;
        border-radius: 3px;
        box-sizing: border-box;
        background: #fff;
        color: #000;
    }

    .zoom button {
        width: 22px;
        height: 22px;
        font-size: 17px;
        font-weight: 700;
    }

    .zoom button:first-child {
        border-bottom: 1px solid #ccc;
    }

    .layers {
        width: 34px;
        height: 34px;
        border-radius: 4px;
        background: #fff;
    }

    .attribution {
        position: absolute;
        right: 0;
        bottom: 0;
        display: flex;
        align-items: center;
        gap: 3px;
        height: 14px;
        padding: 0 4px;
        background: rgba(255, 255, 255, 0.85);
        color: #333;
        font-family: "Liberation Sans", Arial, sans-serif;
        line-height: 14px;
    }

    .attribution a {
        color: #0078a8;
        text-decoration: none;
    }

    .fields {
        display: grid;
        grid-template-columns: 1fr 1fr;
        gap: 13px 12px;
    }

    .field {
        display: flex;
        flex-direction: column;
        gap: 4px;
        min-width: 0;
    }

    label {
        color: #40454a;
    }

    .input-group {
        display: flex;
        height: 30px;
        box-sizing: border-box;
        border: 1px solid #dee2e6;
        border-radius: 5px;
        overflow: hidden;
    }

    .addon {
        display: flex;
        align-items: center;
        justify-content: center;
        width: 30px;
        border-right: 1px solid #dee2e6;
        background: #f2f5ff;
    }

    input {
        flex: 1;
        min-width: 0;
        padding: 0 9px;
        border: 0;
        outline: 0;
        background: #fff;
        color: #40454a;
        font: inherit;
    }

    .btn-outline {
        gap: 2px;
        height: 24px;
        margin-top: 11px;
        padding: 0 6px;
        border: 1px solid #0d6efd;
        border-radius: 3px;
        color: #0d6efd;
        font-size: 10px;
    }

    hr {
        height: 1px;
        margin: 6px 0 7px;
        border: 0;
        background: #cfd0d1;
    }

    .scrollbar {
        display: flex;
        flex-direction: column;
        width: 16px;
        background: #f1f1f1;
    }

    .track-area {
        flex: 1;
        padding: 0 2px;
    }

    .thumb {
        height: 73%;
        background: #c1c1c1;
    }

    .modal-footer {
        display: flex;
        align-items: center;
        justify-content: flex-end;
        gap: 6px;
        height: 54px;
        padding: 0 12px;
        border-top: 1px solid #dee2e6;
    }

    .btn {
        gap: 3px;
        height: 29px;
        padding: 0 9px;
        border-radius: 5px;
        color: #fff;
    }

    .secondary { background: #6c757d; }
    .primary { background: #0d6efd; }

    /* taskbar */
    .taskbar {
        display: flex;
        align-items: stretch;
        height: 37px;
        background: linear-gradient(90deg, #0c1518, #121a1c 15%, #241a17 22%, #141313 30%, #262122 40%, #10100f 52%, #171312 75%, #0b1211 85%, #060606);
        color: #fff;
    }

    .start {
        width: 51px;
        margin-right: 6px;
    }

    .tasks {
        display: flex;
        flex: 1;
        gap: 4px;
    }

    .task {
        width: 54px;
        border: 1px solid transparent;
        border-radius: 3px;
    }

    .task.open {
        border-color: #85878a;
        background: linear-gradient(135deg, #77797a, #2b2c2c 50%, #3b3a3a);
    }

    .task.focused {
        border-color: #d8d8d8;
        background: linear-gradient(135deg, #d2d2d2, #858686 50%, #a6a6a6);
    }

    .word { color: #2b579a; }
    .excel { color: #217346; }

    .tray {
        display: flex;
        align-items: center;
        gap: 8px;
    }

    .lang {
        margin-right: 9px;
        font-size: 10px;
    }

    .clock {
        display: flex;
        flex-direction: column;
        align-items: center;
        width: 62px;
        font-size: 10px;
        line-height: 15px;
    }

    .desktop {
        align-self: stretch;
        width: 12px;
        border: 1px solid #555;
        background: linear-gradient(160deg, #666, #151515 60%);
    }
</style>
